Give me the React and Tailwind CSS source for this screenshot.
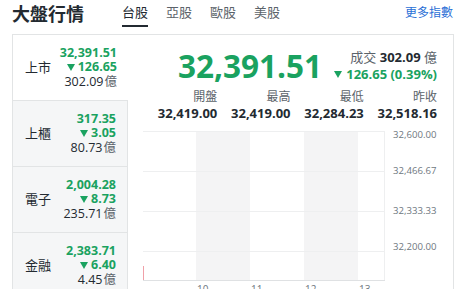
const SIDE = [
  { name: "上市", value: "32,391.51", change: "126.65", vol: "302.09", active: true },
  { name: "上櫃", value: "317.35", change: "3.05", vol: "80.73" },
  { name: "電子", value: "2,004.28", change: "8.73", vol: "235.71" },
  { name: "金融", value: "2,383.71", change: "6.40", vol: "4.45" },
];

const STATS = [
  { label: "開盤", value: "32,419.00" },
  { label: "最高", value: "32,419.00" },
  { label: "最低", value: "32,284.23" },
  { label: "昨收", value: "32,518.16" },
];

const TABS = ["台股", "亞股", "歐股", "美股"];

const FONT = { fontFamily: '"Open Sans", "Noto Sans CJK TC", sans-serif' };

function Down({ className = "" }) {
  return (
    <svg width="8" height="7" viewBox="0 0 8 7" className={className} aria-hidden>
      <path d="M0 0h8L4 7z" fill="currentColor" />
    </svg>
  );
}

function SideRow({ item, first }) {
  return (
    <div
      className={`flex items-center justify-between pl-3 pr-[11px] ${first ? "h-[65px]" : "h-[66px] border-t border-[#e2e4e5]"} ${
        item.active ? "bg-white" : "bg-[#f5f6f7] border-r border-r-[#e2e4e5]"
      }`}
    >
      <span className="text-[13px] text-[#232a31]">{item.name}</span>
      <div className="flex flex-col items-end leading-[14.5px]">
        <span className="text-[12.5px] font-bold text-[#1aa260]">{item.value}</span>
        <span className="flex items-center gap-[3px] text-[12.5px] font-bold text-[#1aa260]">
          <Down />
          {item.change}
        </span>
        <span className="text-[12.5px] text-[#232a31]">
          {item.vol}
          <span className="ml-[1px] text-[#5b636a]">億</span>
        </span>
      </div>
    </div>
  );
}

function Chart() {
  const grid = [10, 50, 90, 130];
  const labels = ["32,600.00", "32,466.67", "32,333.33", "32,200.00"];
  const labelY = [14, 50, 90, 126];
  const hours = [
    { x: 68, t: "10" },
    { x: 122, t: "11" },
    { x: 176, t: "12" },
    { x: 230, t: "13" },
  ];
  return (
    <svg width="325" height="168" className="block" style={FONT}>
      <rect x="68" y="10" width="54" height="149" fill="#f4f4f5" />
      <rect x="176" y="10" width="54" height="149" fill="#f4f4f5" />
      {grid.map((y) => (
        <line key={y} x1="15" x2="257" y1={y + 0.5} y2={y + 0.5} stroke="#eeeff0" />
      ))}
      <line x1="256.5" x2="256.5" y1="10" y2="159" stroke="#eeeff0" />
      <line x1="15" x2="257" y1="159.5" y2="159.5" stroke="#dfe1e3" />
      <line x1="15.5" x2="15.5" y1="145" y2="159" stroke="#f0a0a8" />
      {labels.map((t, i) => (
        <text key={t} x="265" y={labelY[i]} dominantBaseline="middle" fontSize="9.6" fill="#6e7780">
          {t}
        </text>
      ))}
      {hours.map((h) => (
        <text key={h.t} x={h.x + 1} y="172" fontSize="10" fill="#6e7780">
          {h.t}
        </text>
      ))}
    </svg>
  );
}

export default function App() {
  return (
    <div className="h-[289px] w-[464px] overflow-hidden bg-white" style={FONT}>
      <header className="flex h-[34px] items-start pl-3 pr-[11px]">
        <h1 className="mt-[3px] text-[18px] font-bold leading-[22px] text-[#232a31]">大盤行情</h1>
        <nav className="ml-[38px] flex gap-[18px]">
          {TABS.map((t, i) => (
            <span
              key={t}
              className={`flex h-[27px] items-center border-b-2 text-[13px] ${
                i === 0 ? "border-[#232a31] text-[#232a31]" : "border-transparent text-[#5b636a]"
              }`}
            >
              {t}
            </span>
          ))}
        </nav>
        <a className="ml-auto mt-[5px] text-[12px] leading-[16px] text-[#2a6fd6]">更多指數</a>
      </header>

      <div className="ml-3 mr-[10px] flex border-x border-t border-[#e2e4e5]">
        <aside className="w-[115px] shrink-0">
          {SIDE.map((s, i) => (
            <SideRow key={s.name} item={s} first={i === 0} />
          ))}
        </aside>

        <main className="flex-1">
          <div className="px-4 pt-[13px]">
            <div className="flex h-[36px] items-center justify-between pl-[34px]">
              <span className="text-[31.5px] font-bold leading-[36px] text-[#1aa260]">32,391.51</span>
              <div className="flex flex-col items-end leading-[17px]">
                <span className="text-[13px] text-[#5b636a]">
                  成交 <span className="font-bold text-[#232a31]">302.09</span> 億
                </span>
                <span className="flex items-center gap-[4px] text-[13px] font-bold text-[#1aa260]">
                  <Down />
                  126.65 (0.39%)
                </span>
              </div>
            </div>
            <div className="mt-[5px] grid grid-cols-4">
              {STATS.map((s) => (
                <div key={s.label} className="flex flex-col items-end leading-[16px]">
                  <span className="text-[12px] text-[#5b636a]">{s.label}</span>
                  <span className="text-[13px] font-bold text-[#232a31]">{s.value}</span>
                </div>
              ))}
            </div>
          </div>
          <Chart />
        </main>
      </div>
    </div>
  );
}
